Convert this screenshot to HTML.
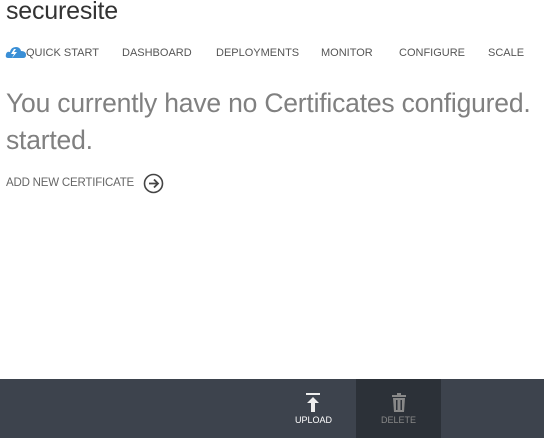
<html><head><style>
body{margin:0;width:544px;height:438px;overflow:hidden;background:#fff;font-family:"Liberation Sans",sans-serif;position:relative}
.t{position:absolute;left:6px;top:-3px;font-size:25px;color:#333;letter-spacing:-0.2px}
.nav{position:absolute;top:47px;font-size:11px;color:#555;white-space:nowrap}
.clip{position:absolute;left:0;top:0;width:544px;height:438px;overflow:hidden}
.big{position:absolute;left:6px;top:85px;font-size:26.5px;line-height:37px;color:#808080;white-space:nowrap;letter-spacing:-0.2px}
.add{position:absolute;left:6px;top:177px;font-size:11.5px;color:#666;letter-spacing:-0.2px}
.bar{position:absolute;left:0;top:379px;width:544px;height:59px;background:#3d434d}
.del{position:absolute;left:356px;top:0;width:85px;height:59px;background:#2c3138}
.lbl{position:absolute;top:36px;font-size:9px;width:85px;text-align:center}
</style></head><body>
<div class="clip">
<div class="t">securesite</div>
<svg style="position:absolute;left:5px;top:45px" width="22" height="14" viewBox="0 0 22 14"><path d="M3 13 Q0 13 1 9 Q2 6 5 7 Q6 2 11 2 Q15 2 16 6 Q21 6 21 10 Q21 13 18 13Z" fill="#3a8fd6"/><path d="M9 4 L6 9 L9 9 L7 13 L12 7 L9 7 L11 4Z" fill="#fff"/></svg>
<div class="nav" style="left:26px">QUICK START</div>
<div class="nav" style="left:122px">DASHBOARD</div>
<div class="nav" style="left:216px">DEPLOYMENTS</div>
<div class="nav" style="left:321px">MONITOR</div>
<div class="nav" style="left:399px">CONFIGURE</div>
<div class="nav" style="left:488px">SCALE</div>
<div class="big">You currently have no Certificates configured.<br>started.</div>
<div class="add">ADD NEW CERTIFICATE</div>
<svg style="position:absolute;left:143px;top:173px" width="21" height="21" viewBox="0 0 21 21"><circle cx="10.5" cy="10.5" r="9" fill="none" stroke="#444" stroke-width="1.6"/><path d="M6 10.5H15M11 6.5L15 10.5L11 14.5" fill="none" stroke="#444" stroke-width="1.8"/></svg>
<div class="bar">
<svg style="position:absolute;left:305px;top:14px" width="16" height="20" viewBox="0 0 16 20"><rect x="1" y="0" width="14" height="2" fill="#eee"/><path d="M8 4L2 10H6V19H10V10H14Z" fill="#eee"/></svg>
<div class="lbl" style="left:271px;color:#fff">UPLOAD</div>
<div class="del">
<svg style="position:absolute;left:35px;top:14px" width="16" height="20" viewBox="0 0 16 20"><rect x="6" y="0" width="4" height="2" fill="#888"/><rect x="1" y="2" width="14" height="2" fill="#888"/><path d="M2 5H14L13 19H3Z" fill="#888"/><rect x="5" y="7" width="1.5" height="10" fill="#2c3138"/><rect x="9.5" y="7" width="1.5" height="10" fill="#2c3138"/></svg>
<div class="lbl" style="left:0;color:#888">DELETE</div>
</div>
</div>
</div>
</body></html>
